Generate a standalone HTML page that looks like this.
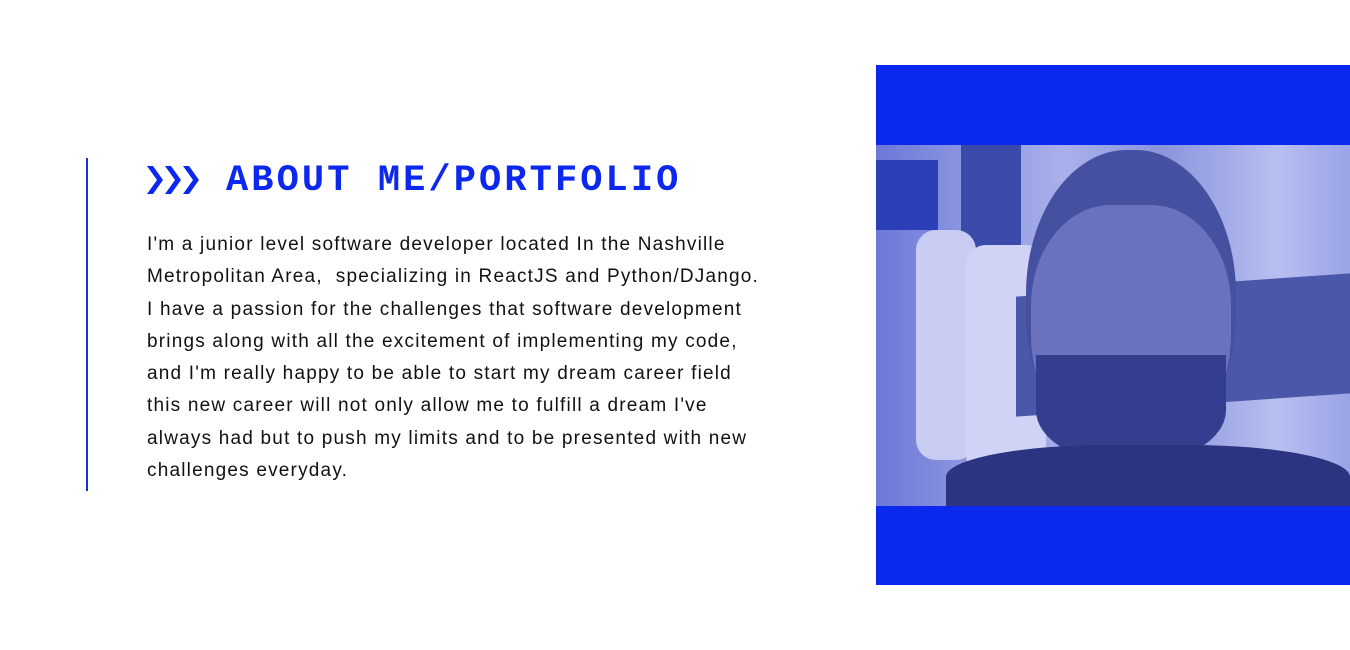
<!DOCTYPE html>
<html><head><style>
body{margin:0;width:1350px;height:650px;background:#fff;position:relative;overflow:hidden;font-family:"Liberation Sans",sans-serif}
.bar{position:absolute;left:86px;top:158px;width:2px;height:333px;background:#1530e8}
h1{position:absolute;left:226px;top:158px;margin:0;font:bold 37px/46px "Liberation Mono",monospace;letter-spacing:3.1px;color:#0c27ee;white-space:nowrap}
.arr{position:absolute;left:147px;top:166px}
p{position:absolute;left:147px;top:229px;width:700px;margin:0;font-size:19px;line-height:32.3px;letter-spacing:1.2px;color:#111;white-space:nowrap}
.img{position:absolute;left:876px;top:65px;width:474px;height:520px;background:#0b28ef}
.photo{position:absolute;left:0;top:80px;width:474px;height:361px;overflow:hidden;background:linear-gradient(90deg,#6b78d8 0%,#8e97e0 20%,#a9b0ea 40%,#8a94dc 60%,#b8bff0 85%,#9aa3e6 100%)}
</style></head><body>
<div class="bar"></div>
<svg class="arr" width="54" height="28" viewBox="0 0 54 28"><g fill="#0c27ee"><path d="M0 0h6l10 14-10 14H0l10-14z"/><path d="M18 0h6l10 14-10 14h-6l10-14z"/><path d="M36 0h6l10 14-10 14h-6l10-14z"/></g></svg>
<h1>ABOUT ME/PORTFOLIO</h1>
<p>I'm a junior level software developer located In the Nashville<br>Metropolitan Area,&nbsp; specializing in ReactJS and Python/DJango.<br>I have a passion for the challenges that software development<br>brings along with all the excitement of implementing my code,<br>and I'm really happy to be able to start my dream career field<br>this new career will not only allow me to fulfill a dream I've<br>always had but to push my limits and to be presented with new<br>challenges everyday.</p>
<div class="img"><div class="photo">
<div style="position:absolute;left:0;top:15px;width:62px;height:70px;background:#2a3fb8"></div>
<div style="position:absolute;left:85px;top:0;width:60px;height:140px;background:#3b4aa8"></div>
<div style="position:absolute;left:40px;top:85px;width:60px;height:230px;border-radius:20px;background:#c8ccf2"></div>
<div style="position:absolute;left:90px;top:100px;width:80px;height:230px;border-radius:20px;background:#d0d3f5"></div>
<div style="position:absolute;left:140px;top:140px;width:334px;height:120px;background:#4b57a8;transform:skewY(-4deg)"></div>
<div style="position:absolute;left:150px;top:5px;width:210px;height:300px;border-radius:48% 48% 45% 45%;background:#4650a0"></div>
<div style="position:absolute;left:155px;top:60px;width:200px;height:250px;border-radius:40% 40% 48% 48%;background:#6a72c0"></div>
<div style="position:absolute;left:160px;top:210px;width:190px;height:110px;border-radius:0 0 50% 50%;background:#353d8e"></div>
<div style="position:absolute;left:70px;top:300px;width:404px;height:80px;border-radius:40% 40% 0 0;background:#2c3380"></div>
</div></div>
</body></html>
